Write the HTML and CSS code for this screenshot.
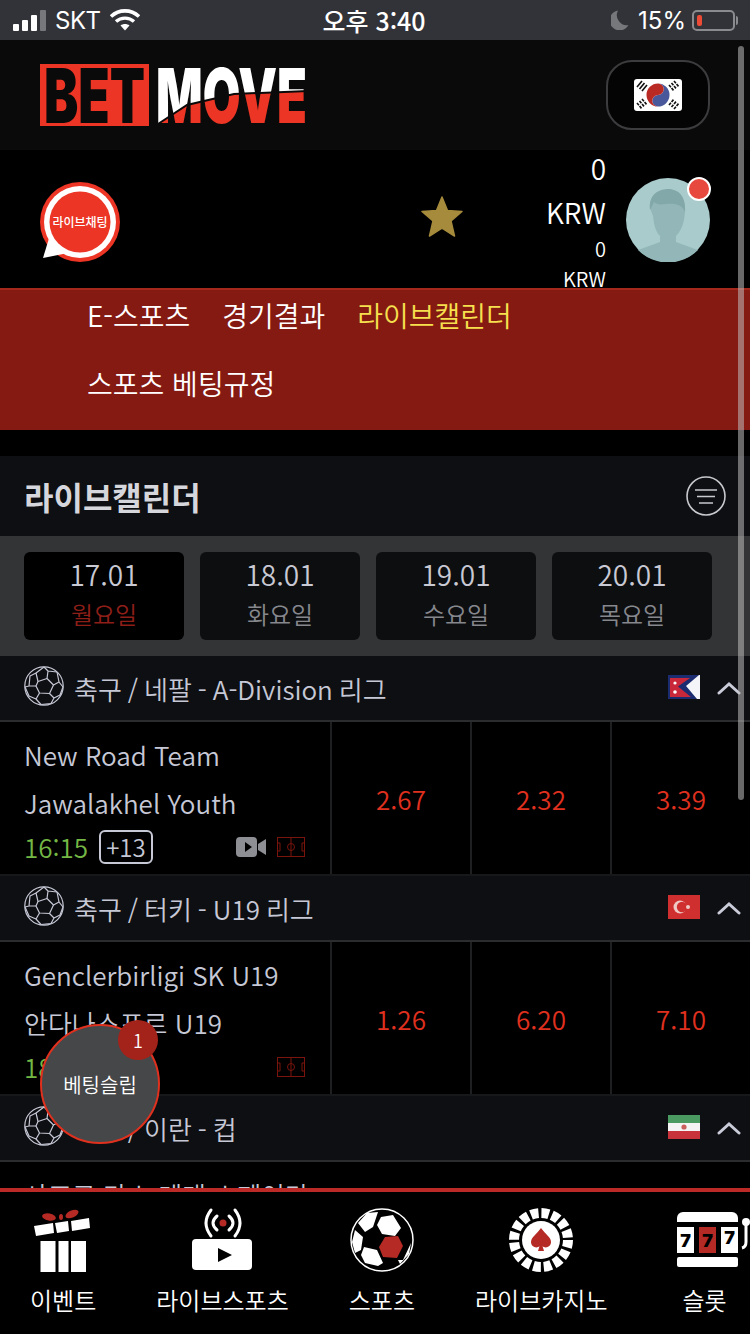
FILE: index.html
```html
<!doctype html>
<html lang="ko">
  <head>
    <meta charset="UTF-8" />
    <meta name="viewport" content="width=device-width, initial-scale=1.0" />
    <title>BETMOVE</title>
    <link rel="stylesheet" href="styles.css">
  </head>
  <body>
    <svg class="defs" width="0" height="0" aria-hidden="true">
      <symbol id="ball" viewBox="0 0 40 40">
        <g fill="none" stroke="currentColor" stroke-width="1.2" stroke-linejoin="round">
          <circle cx="20" cy="20" r="19.2" />
          <path d="M14 15.5 L23 12.5 L29.5 19 L25.5 27.5 L15.5 27 L12 20 Z" />
          <path d="M14 15.5 L12 7 L20 1 M23 12.5 L24 5 L20 1 M24 5 L33 6 M29.5 19 L35 16 L33 6 M35 16 L39 21 M25.5 27.5 L30 32 L36 29 L39 21 M30 32 L27 37.5 M15.5 27 L12 33 L17 38.5 L27 37.5 M12 33 L5 30 L1 21 M12 20 L5 20 L1 21 M5 20 L6 10 L12 7" />
        </g>
      </symbol>
      <symbol id="chevron" viewBox="0 0 24 14">
        <path d="M2 12 L12 3 L22 12" fill="none" stroke="#c9cbd8" stroke-width="3" stroke-linecap="round" />
      </symbol>
      <symbol id="field" viewBox="0 0 28 20">
        <g fill="none" stroke="#7a140d" stroke-width="1">
          <rect x="0.5" y="0.5" width="27" height="19" />
          <path d="M14 0.5 V19.5 M0.5 6 H3 V14 H0.5 M27.5 6 H25 V14 H27.5" />
          <circle cx="14" cy="10" r="3.5" />
        </g>
      </symbol>
    </svg>

    <div class="page">
      <div class="status">
        <div class="status-left">
          <span class="signal"><i class="b1"></i><i class="b2"></i><i class="b3"></i><i class="b4"></i></span>
          <span class="carrier">SKT</span>
          <svg class="wifi" width="30" height="22" viewBox="0 0 30 22">
            <path d="M1 7.5 C9 0 21 0 29 7.5" fill="none" stroke="#fff" stroke-width="3.6" />
            <path d="M6 12.5 C11 8 19 8 24 12.5" fill="none" stroke="#fff" stroke-width="3.4" />
            <path d="M15 21.5 L10.5 16.5 C13 14.5 17 14.5 19.5 16.5 Z" fill="#fff" />
          </svg>
        </div>
        <div class="status-time">오후 3:40</div>
        <div class="status-right">
          <svg width="18" height="20" viewBox="0 0 18 20">
            <path d="M7 0.5 A10 10 0 1 0 17.5 15 A10 10 0 0 1 7 0.5 Z" fill="#77787c" />
          </svg>
          <span class="percent">15%</span>
          <span class="battery"><i></i></span>
        </div>
      </div>

      <header class="top">
        <svg class="logo" width="268" height="62" viewBox="0 0 268 62">
          <defs>
            <mask id="move-mask" maskUnits="userSpaceOnUse" x="110" y="0" width="158" height="62">
              <text class="logo-text" x="116" y="59" textLength="151" lengthAdjust="spacingAndGlyphs" fill="#fff">MOVE</text>
            </mask>
          </defs>
          <rect width="109" height="62" fill="#ec3524" />
          <text class="logo-text" x="4" y="59" textLength="101" lengthAdjust="spacingAndGlyphs" fill="#0a0a0b">BET</text>
          <g mask="url(#move-mask)">
            <rect x="110" width="158" height="62" fill="#fff" />
            <path d="M118 60 L147 41 L194 30 L268 27 V62 H118 Z" fill="#ec3524" />
            <path d="M118 60 L147 41 L194 30 L268 27" fill="none" stroke="#0a0a0b" stroke-width="2" />
          </g>
        </svg>
        <button class="lang" type="button">
          <svg width="48" height="32" viewBox="0 0 48 32">
            <rect width="48" height="32" rx="3" fill="#fff" />
            <path d="M24 4.5 A11.5 11.5 0 0 1 24 27.5 A5.75 5.75 0 0 1 24 16 A5.75 5.75 0 0 0 24 4.5 Z" fill="#49589a" />
            <path d="M24 4.5 A11.5 11.5 0 0 0 24 27.5 A5.75 5.75 0 0 1 24 16 A5.75 5.75 0 0 0 24 4.5 Z" fill="#b92a25" />
            <g stroke="#111" stroke-width="1.6">
              <path d="M3 8 L8 2 M5.5 10 L10.5 4 M8 12 L13 6" />
              <path d="M35 6 L40 12 M37.5 4 L42.5 10 M40 2 L45 8" stroke-dasharray="3 1" />
              <path d="M3 24 L8 30 M5.5 22 L10.5 28 M8 20 L13 26" stroke-dasharray="3 1" />
              <path d="M35 26 L40 20 M37.5 28 L42.5 22 M40 30 L45 24" stroke-dasharray="3 1" />
            </g>
          </svg>
        </button>
      </header>

      <section class="user">
        <svg class="chat" width="80" height="82" viewBox="0 0 80 82">
          <circle cx="40" cy="41" r="40" fill="#ec3524" />
          <circle cx="40" cy="41" r="36" fill="#fff" />
          <path d="M3 77 L10 54 L28 72 Z" fill="#fff" />
          <circle cx="40" cy="41" r="30.5" fill="#ec3524" />
          <text class="chat-text" x="40" y="46" text-anchor="middle">라이브채팅</text>
        </svg>
        <svg class="star" width="42" height="42" viewBox="0 0 42 42">
          <path d="M21 1 L26.5 14.5 L41 15.5 L30 25 L33.5 40 L21 32 L8.5 40 L12 25 L1 15.5 L15.5 14.5 Z" fill="#a68b3c" stroke="#a68b3c" stroke-width="1.5" stroke-linejoin="round" />
        </svg>
        <div class="balance">
          <div class="big">0</div>
          <div class="big">KRW</div>
          <div class="small">0</div>
          <div class="small">KRW</div>
        </div>
        <div class="avatar">
          <svg width="84" height="84" viewBox="0 0 84 84">
            <circle cx="42" cy="42" r="42" fill="#a9cbcc" />
            <path d="M24 30 C24 14 34 12 42 12 C54 12 60 20 59 34 C58 48 54 54 50 58 L50 64 L72 72 A42 42 0 0 1 12 72 L34 64 L34 58 C30 54 28 48 27 38 Z" fill="#93b7b8" />
            <path d="M24 32 C22 14 36 11 42 11 C54 11 60 20 59 34 C56 26 48 25 40 26 C34 27 30 26 28 24 Z" fill="#83a8a9" />
          </svg>
          <span class="dot"></span>
        </div>
      </section>

      <nav class="menu">
        <a>E-스포츠</a>
        <a>경기결과</a>
        <a class="active">라이브캘린더</a>
        <a>스포츠 베팅규정</a>
      </nav>

      <main class="content">
        <div class="title-bar">
          <h1>라이브캘린더</h1>
          <svg width="40" height="40" viewBox="0 0 40 40">
            <circle cx="20" cy="20" r="19" fill="none" stroke="#c8c9cf" stroke-width="1.6" />
            <path d="M9 14 H31 M11 20.500 H29 M13 27 H27" stroke="#c8c9cf" stroke-width="1.6" />
          </svg>
        </div>

        <div class="dates">
          <div class="date active"><b>17.01</b><span>월요일</span></div>
          <div class="date"><b>18.01</b><span>화요일</span></div>
          <div class="date"><b>19.01</b><span>수요일</span></div>
          <div class="date"><b>20.01</b><span>목요일</span></div>
        </div>

        <div class="league">
          <svg class="ball"><use href="#ball" /></svg>
          <span class="league-name">축구 / 네팔 - A-Division 리그</span>
          <svg class="flag" viewBox="0 0 32 24">
            <rect width="32" height="24" fill="#f4f5f8" />
            <path d="M0 0 H31 L18 11 L29 24 H0 Z" fill="#1b2c70" />
            <path d="M2 3 H22 L10 11.500 L23 22 H2 Z" fill="#c9283a" />
            <circle cx="7" cy="8" r="1.600" fill="#fff" />
            <circle cx="7" cy="17" r="1.800" fill="#fff" />
          </svg>
          <svg class="chev"><use href="#chevron" /></svg>
        </div>
        <div class="match">
          <div class="teams">
            <div>New Road Team</div>
            <div>Jawalakhel Youth</div>
            <div class="meta">
              <span class="time">16:15</span>
              <span class="more">+13</span>
              <svg class="cam" width="30" height="20" viewBox="0 0 30 20">
                <path d="M4 0 H17 A4 4 0 0 1 21 4 V16 A4 4 0 0 1 17 20 H4 A4 4 0 0 1 0 16 V4 A4 4 0 0 1 4 0 Z M22 7 L30 2 V18 L22 13 Z" fill="#8d8f94" />
                <path d="M9 5 L9 15 L16 10 Z" fill="#000" />
              </svg>
              <svg class="pitch"><use href="#field" /></svg>
            </div>
          </div>
          <div class="odd">2.67</div>
          <div class="odd">2.32</div>
          <div class="odd">3.39</div>
        </div>

        <div class="league">
          <svg class="ball"><use href="#ball" /></svg>
          <span class="league-name">축구 / 터키 - U19 리그</span>
          <svg class="flag" viewBox="0 0 32 24">
            <rect width="32" height="24" fill="#cf2f2f" />
            <circle cx="12" cy="12" r="6.500" fill="#efc9c5" />
            <circle cx="14" cy="12" r="5.200" fill="#cf2f2f" />
            <circle cx="20" cy="12" r="2" fill="#efc9c5" />
          </svg>
          <svg class="chev"><use href="#chevron" /></svg>
        </div>
        <div class="match">
          <div class="teams">
            <div>Genclerbirligi SK U19</div>
            <div>안다나스포르 U19</div>
            <div class="meta">
              <span class="time">18:00</span>
              <svg class="pitch"><use href="#field" /></svg>
            </div>
          </div>
          <div class="odd">1.26</div>
          <div class="odd">6.20</div>
          <div class="odd">7.10</div>
        </div>

        <div class="league">
          <svg class="ball"><use href="#ball" /></svg>
          <span class="league-name">축구 / 이란 - 컵</span>
          <svg class="flag" viewBox="0 0 32 24">
            <rect width="32" height="8" fill="#4a9a62" />
            <rect y="8" width="32" height="8" fill="#f4f4f4" />
            <rect y="16" width="32" height="8" fill="#c8323a" />
            <circle cx="16" cy="12" r="2.600" fill="#c9605e" />
          </svg>
          <svg class="chev"><use href="#chevron" /></svg>
        </div>
        <div class="match">
          <div class="teams">
            <div>사프로 타스 메개 스페이라 FC</div>
          </div>
        </div>
      </main>

      <footer class="tabs">
        <a class="tab">
          <svg width="60" height="70" viewBox="0 0 60 70">
            <path d="M7.500 37 H22.500 V68 H7.500 Z M25.500 37 H35.500 V68 H25.500 Z M38 37 H53 V68 H38 Z" fill="#fff" />
            <path d="M1 22 L20 19 L21 29 L3 32 Z M22 19 L35 17 L36 27 L24 29 Z M38 17 L56 14 L57 24 L39 27 Z" fill="#fff" />
            <ellipse cx="16" cy="13" rx="7" ry="3.500" transform="rotate(10 16 13)" fill="#b52a24" />
            <ellipse cx="39" cy="10" rx="7" ry="3.500" transform="rotate(-25 39 10)" fill="#b52a24" />
            <ellipse cx="28" cy="13" rx="2" ry="3" fill="#b52a24" />
          </svg>
          <span>이벤트</span>
        </a>
        <a class="tab">
          <svg width="64" height="70" viewBox="0 0 64 70">
            <rect x="2" y="35" width="60" height="31" rx="4" fill="#fff" />
            <path d="M28 44 L42 51 L28 58 Z" fill="#000" />
            <circle cx="33" cy="19" r="3.500" fill="#b52a24" />
            <path d="M27 12 Q19 19 27 26 M39 12 Q47 19 39 26 M21 6 Q11 19 21 32 M45 6 Q55 19 45 32" fill="none" stroke="#fff" stroke-width="3" stroke-linecap="round" />
          </svg>
          <span>라이브스포츠</span>
        </a>
        <a class="tab">
          <svg width="64" height="70" viewBox="0 0 64 70">
            <circle cx="32" cy="36" r="31" fill="#000" stroke="#fff" stroke-width="1.500" />
            <path d="M31 13 L43 11 L51 24 L45 32 L32 30 L27 21 Z M8 19 L17 9 L28 8 L27 11 L23 23 L15 28 Z M5 26 L13 33 L11 46 L5 49 L2 38 Z M14 43 L27 46 L33 59 L28 62 L15 59 L11 51 Z M61 39 L53 56 L48 56 L50 60 L59 50 Z" fill="#fff" />
            <path d="M35 33 L48 32 L53 42 L47 54 L33 53 L29 43 Z" fill="#b52a24" />
          </svg>
          <span>스포츠</span>
        </a>
        <a class="tab">
          <svg width="64" height="70" viewBox="0 0 64 70">
            <circle cx="32" cy="36" r="27" fill="none" stroke="#fff" stroke-width="10" stroke-dasharray="7.600 3" />
            <circle cx="32" cy="36" r="19" fill="#fff" />
            <path d="M32 24 C36 30 42 33 42 38 C42 43 36 45 33.500 42 L35 47 H29 L30.500 42 C28 45 22 43 22 38 C22 33 28 30 32 24 Z" fill="#b52a24" />
          </svg>
          <span>라이브카지노</span>
        </a>
        <a class="tab tab-slot">
          <svg width="84" height="70" viewBox="0 0 84 70">
            <path d="M10 18 V14 A6 6 0 0 1 16 8 H65 A6 6 0 0 1 71 14 V18 Z" fill="#fff" />
            <rect x="10" y="23" width="17" height="26" fill="#fff" />
            <rect x="32" y="23" width="17" height="26" fill="#b52a24" />
            <rect x="54" y="23" width="17" height="26" fill="#fff" />
            <rect x="10" y="53" width="61" height="10" rx="2" fill="#fff" />
            <text class="seven" x="18.500" y="43" text-anchor="middle">7</text>
            <text class="seven" x="40.500" y="43" text-anchor="middle">7</text>
            <text class="seven" x="62.500" y="40" text-anchor="middle">7</text>
            <circle cx="79" cy="18" r="4" fill="#fff" />
            <path d="M79 20 V38 Q79 43 75 44" fill="none" stroke="#fff" stroke-width="3" />
          </svg>
          <span>슬롯</span>
        </a>
      </footer>

      <div class="scrollbar"></div>
      <div class="slip">
        베팅슬립
        <span class="slip-count">1</span>
      </div>
    </div>
  </body>
</html>
```

FILE: styles.css
```css
* {
  box-sizing: border-box;
}

html,
body {
  margin: 0;
  height: 100%;
  background: #000;
  font-family: "Noto Sans CJK KR", "Noto Sans", sans-serif;
  font-weight: 350;
}

svg {
  display: block;
  flex: none;
}

.defs {
  position: absolute;
}

.page {
  position: relative;
  display: flex;
  flex-direction: column;
  width: 750px;
  height: 1334px;
  overflow: hidden;
}

/* status bar */
.status {
  display: grid;
  grid-template-columns: 1fr auto 1fr;
  align-items: center;
  flex: none;
  height: 40px;
  padding: 0 15px 0 13px;
  background: #323338;
  color: #fff;
  font-family: Inter, "Noto Sans CJK KR", sans-serif;
  font-size: 24px;
  font-weight: 400;
}

.status-left,
.status-right {
  display: flex;
  align-items: center;
}

.status-left {
  gap: 9px;
}

.carrier {
  letter-spacing: -0.5px;
}

.status-right {
  justify-content: flex-end;
  gap: 9px;
}

.percent {
  margin-right: -3px;
}

.status-time {
  font-family: "Noto Sans CJK KR", sans-serif;
  font-size: 25px;
  font-weight: 500;
}

.signal {
  display: flex;
  align-items: flex-end;
  gap: 3px;
  height: 21px;
}

.signal i {
  width: 6px;
  border-radius: 1px;
  background: #fff;
}

.signal .b1 {
  height: 7px;
}

.signal .b2 {
  height: 11px;
}

.signal .b3 {
  height: 16px;
}

.signal .b4 {
  height: 21px;
  background: #77787c;
}

.battery {
  position: relative;
  display: block;
  width: 43px;
  height: 21px;
  padding: 3px;
  border: 2px solid #8a8b8e;
  border-radius: 5px;
}

.battery::after {
  content: "";
  position: absolute;
  top: 4px;
  right: -5px;
  width: 2px;
  height: 9px;
  border-radius: 0 2px 2px 0;
  background: #8a8b8e;
}

.battery i {
  display: block;
  width: 5px;
  height: 100%;
  border-radius: 2px;
  background: #ee4b36;
}

/* header */
.top {
  display: flex;
  justify-content: space-between;
  align-items: center;
  flex: none;
  height: 110px;
  padding: 0 40px;
  background: #0a0a0b;
}

.logo-text {
  font-family: Inter, Roboto, sans-serif;
  font-size: 76px;
  font-weight: 900;
}

.lang {
  display: flex;
  justify-content: center;
  align-items: center;
  width: 104px;
  height: 70px;
  padding: 0;
  border: 2px solid #3c3c3e;
  border-radius: 26px;
  background: #040404;
}

.user {
  display: flex;
  align-items: center;
  flex: none;
  height: 138px;
  padding: 0 40px;
  background: #000;
}

.chat {
  margin-top: 6px;
}

.chat-text {
  fill: #fff;
  font-size: 12px;
  font-weight: 500;
}

.star {
  margin-left: auto;
  margin-right: 83px;
  margin-top: -4px;
}

.balance {
  align-self: flex-start;
  margin-top: -4px;
  text-align: right;
  color: #fff;
}

.balance .big {
  font-size: 28px;
  line-height: 44px;
}

.balance .small {
  font-size: 20px;
  line-height: 30px;
}

.avatar {
  position: relative;
  margin-left: 20px;
  margin-top: 2px;
}

.dot {
  position: absolute;
  top: -1px;
  right: -1px;
  width: 24px;
  height: 24px;
  border: 2px solid #fff;
  border-radius: 50%;
  background: #e8493f;
}

.menu {
  display: flex;
  flex-wrap: wrap;
  align-content: flex-start;
  gap: 18px 32px;
  flex: none;
  height: 142px;
  padding: 0 87px;
  border-top: 2px solid #a5281c;
  background: #851a13;
  color: #fff;
  font-size: 28px;
  line-height: 50px;
}

.menu .active {
  color: #f6e04e;
}

/* calendar */
.content {
  flex: 1;
  min-height: 0;
  margin-top: 26px;
  overflow: hidden;
}

.title-bar {
  display: flex;
  justify-content: space-between;
  align-items: center;
  height: 80px;
  padding: 0 24px;
  background: #0e0f12;
}

h1 {
  margin: 0;
  color: #d6d7dc;
  font-size: 32px;
  font-weight: 700;
}

.dates {
  display: grid;
  grid-template-columns: repeat(4, 160px);
  gap: 16px;
  height: 120px;
  padding: 16px 24px;
  background: #333436;
}

.date {
  display: flex;
  flex-direction: column;
  align-items: center;
  padding-top: 3px;
  border-radius: 6px;
  background: #0d0e10;
}

.date b {
  color: #c8c9d3;
  font-size: 28px;
  font-weight: 350;
  line-height: 38px;
}

.date span {
  color: #86888d;
  font-size: 24px;
  line-height: 42px;
}

.date.active {
  background: #000;
}

.date.active span {
  color: #8e1f18;
}

.league {
  display: flex;
  align-items: center;
  height: 66px;
  padding: 0 9px 0 24px;
  border-bottom: 2px solid #2b2c2e;
  background: #0e0f12;
  color: #c6c8d6;
  font-size: 26px;
}

.ball {
  width: 40px;
  height: 40px;
  margin-right: 10px;
  margin-top: -4px;
}

.league-name {
  flex: 1;
  word-spacing: -1.3px;
}

.flag {
  width: 32px;
  height: 24px;
  margin-right: 17px;
  margin-top: -2px;
}

.chev {
  width: 24px;
  height: 14px;
}

.match {
  display: grid;
  grid-template-columns: 330px 140px 140px 140px;
  height: 154px;
  border-bottom: 2px solid #17181a;
  background: #000;
}

.teams {
  padding: 9px 0 0 24px;
  color: #c6c8d6;
  font-size: 26px;
  line-height: 48px;
}

.meta {
  display: flex;
  align-items: center;
  height: 34px;
  margin-top: 3px;
}

.time {
  margin-right: 11px;
  color: #74b745;
}

.more {
  height: 34px;
  padding: 0 5px;
  border: 2px solid #c6c8d6;
  border-radius: 6px;
  font-size: 24px;
  line-height: 30px;
}

.cam {
  margin-left: auto;
  margin-right: 11px;
}

.pitch {
  width: 28px;
  height: 20px;
  margin-left: auto;
  margin-right: 25px;
}

.cam + .pitch {
  margin-left: 0;
}

.odd {
  display: flex;
  justify-content: center;
  align-items: center;
  border-left: 2px solid #1e1f21;
  color: #e0301f;
  font-size: 26px;
}

/* bottom tabs */
.tabs {
  display: flex;
  gap: 60px;
  flex: none;
  height: 146px;
  padding: 12px 0 0 30px;
  overflow: hidden;
  border-top: 4px solid #bb2a26;
  background: #000;
  color: #fff;
  font-size: 24px;
  line-height: 32px;
}

.tab {
  display: flex;
  flex-direction: column;
  align-items: center;
  gap: 10px;
  flex: none;
  white-space: nowrap;
}

.tab-slot {
  align-items: flex-start;
  width: 74px;
}

.tab-slot span {
  align-self: center;
}

.seven {
  fill: #000;
  font-family: Inter, sans-serif;
  font-size: 18px;
  font-weight: 900;
}

/* things on top of the page */
.scrollbar {
  position: absolute;
  top: 46px;
  left: 738px;
  width: 6px;
  height: 754px;
  border-radius: 3px;
  background: rgba(190, 190, 190, 0.55);
}

.slip {
  position: absolute;
  top: 1024px;
  left: 40px;
  display: flex;
  justify-content: center;
  align-items: center;
  width: 120px;
  height: 120px;
  border: 2px solid #e0301e;
  border-radius: 50%;
  background: #464749;
  color: #fff;
  font-size: 20px;
}

.slip-count {
  position: absolute;
  top: -6px;
  right: 0;
  width: 40px;
  height: 40px;
  border-radius: 50%;
  background: #a3231a;
  font-size: 18px;
  line-height: 40px;
  text-align: center;
}
```
